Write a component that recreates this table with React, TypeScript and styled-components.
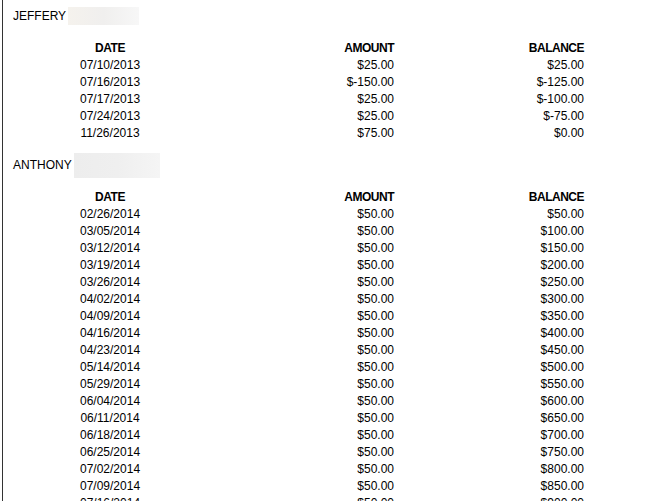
import styled, { createGlobalStyle } from 'styled-components';

const GlobalStyle = createGlobalStyle`
  html, body {
    margin: 0;
    padding: 0;
    background: #ffffff;
  }
  body {
    font-family: 'Liberation Sans', Arial, sans-serif;
    font-size: 12px;
    color: #000000;
  }
`;

const Page = styled.div`
  margin-left: 2px;
  min-height: 501px;
  border-left: 1px solid #333333;
  padding-top: 7px;
  box-sizing: border-box;
`;

const Section = styled.section`
  & + & {
    margin-top: 14px;
  }
`;

const NameRow = styled.div`
  display: flex;
  align-items: center;
  padding-left: 10px;
  height: 18px;
  margin-bottom: 15px;
`;

const NameText = styled.span`
  line-height: 18px;
`;

const Redacted = styled.span<{ w: number; h: number; warm?: boolean }>`
  display: inline-block;
  width: ${(p) => p.w}px;
  height: ${(p) => p.h}px;
  margin-left: 2px;
  margin-top: ${(p) => (p.warm ? 0 : 1)}px;
  background: ${(p) =>
    p.warm
      ? 'linear-gradient(90deg, #f5f2ed 0%, #f0efee 50%, #f7f7f7 100%)'
      : 'linear-gradient(90deg, #ededed 0%, #efefef 50%, #f5f5f5 100%)'};
`;

const Row = styled.div<{ head?: boolean }>`
  display: grid;
  grid-template-columns: 77px 60px 254px 190px;
  height: 17px;
  line-height: 17px;
  font-weight: ${(p) => (p.head ? 700 : 400)};
  letter-spacing: ${(p) => (p.head ? '-0.5px' : 'normal')};
`;

const DateCell = styled.div`
  grid-column: 2;
  text-align: center;
  white-space: nowrap;
`;

const MoneyCell = styled.div`
  text-align: right;
  white-space: nowrap;
`;

type Entry = [string, string, string];

const jeffery: Entry[] = [
  ['07/10/2013', '$25.00', '$25.00'],
  ['07/16/2013', '$-150.00', '$-125.00'],
  ['07/17/2013', '$25.00', '$-100.00'],
  ['07/24/2013', '$25.00', '$-75.00'],
  ['11/26/2013', '$75.00', '$0.00'],
];

const anthonyDates = [
  '02/26/2014', '03/05/2014', '03/12/2014', '03/19/2014', '03/26/2014', '04/02/2014',
  '04/09/2014', '04/16/2014', '04/23/2014', '05/14/2014', '05/29/2014', '06/04/2014',
  '06/11/2014', '06/18/2014', '06/25/2014', '07/02/2014', '07/09/2014', '07/16/2014',
];

const anthony: Entry[] = anthonyDates.map((d, i) => [d, '$50.00', `$${(i + 1) * 50}.00`]);

function Ledger({ name, entries, box }: { name: string; entries: Entry[]; box: { w: number; h: number; warm?: boolean } }) {
  return (
    <Section>
      <NameRow>
        <NameText>{name}</NameText>
        <Redacted {...box} />
      </NameRow>
      <Row head>
        <DateCell>DATE</DateCell>
        <MoneyCell>AMOUNT</MoneyCell>
        <MoneyCell>BALANCE</MoneyCell>
      </Row>
      {entries.map(([d, a, b]) => (
        <Row key={d}>
          <DateCell>{d}</DateCell>
          <MoneyCell>{a}</MoneyCell>
          <MoneyCell>{b}</MoneyCell>
        </Row>
      ))}
    </Section>
  );
}

export default function App() {
  return (
    <>
      <GlobalStyle />
      <Page>
        <Ledger name="JEFFERY" entries={jeffery} box={{ w: 71, h: 18, warm: true }} />
        <Ledger name="ANTHONY" entries={anthony} box={{ w: 86, h: 25 }} />
      </Page>
    </>
  );
}
